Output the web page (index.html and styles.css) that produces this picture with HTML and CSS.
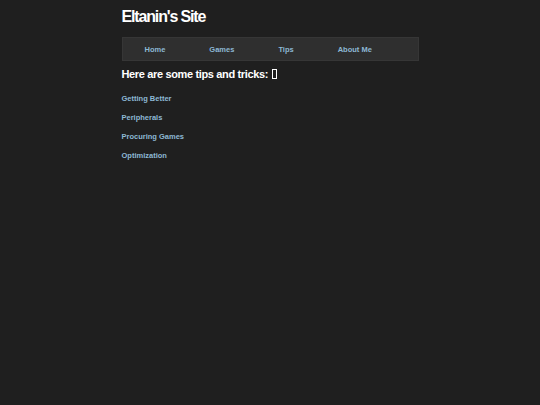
FILE: index.html
```html
<!DOCTYPE html>
<html lang="en">
<head>
<meta charset="utf-8">
<title>Eltanin's Site</title>
<link rel="stylesheet" href="styles.css">
</head>
<body>
<div class="page">
  <h1 class="site-title">Eltanin's Site</h1>
  <nav class="nav">
    <a class="nav-link" href="#">Home</a>
    <a class="nav-link" href="#">Games</a>
    <a class="nav-link" href="#">Tips</a>
    <a class="nav-link" href="#">About Me</a>
  </nav>
  <h2 class="section-title">Here are some tips and tricks: <span class="tofu"></span></h2>
  <div class="tips">
    <a class="tip-link" href="#">Getting Better</a>
    <a class="tip-link" href="#">Peripherals</a>
    <a class="tip-link" href="#">Procuring Games</a>
    <a class="tip-link" href="#">Optimization</a>
  </div>
</div>
</body>
</html>
```
FILE: styles.css
```css
html, body {
  background: #1f1f1f;
}
body {
  margin: 8px;
  font-family: "Liberation Sans", Arial, sans-serif;
  color: #ffffff;
}
.page {
  width: 297px;
  margin: 0 auto;
}
.site-title {
  margin: 0;
  font-size: 16px;
  line-height: 18px;
  font-weight: bold;
  letter-spacing: -1.15px;
  color: #ffffff;
}
.nav {
  display: flex;
  margin-top: 11px;
  height: 22px;
  background: #2f2f2f;
  border: 1px solid #363636;
}
.nav-link {
  padding: 0 22px;
  line-height: 23px;
  font-size: 7.5px;
  font-weight: bold;
  color: #8db8d4;
  text-decoration: none;
}
.section-title {
  margin: 7px 0 0;
  font-size: 11px;
  line-height: 13px;
  font-weight: bold;
  letter-spacing: -0.35px;
  color: #ffffff;
}
.tofu {
  display: inline-block;
  width: 3px;
  height: 8px;
  border: 1px solid #ffffff;
  vertical-align: -1px;
  margin-left: 1px;
}
.tips {
  display: flex;
  flex-direction: column;
  align-items: flex-start;
  margin-top: 8px;
}
.tip-link {
  line-height: 19px;
  font-size: 7.5px;
  font-weight: bold;
  color: #8db8d4;
  text-decoration: none;
}
```
